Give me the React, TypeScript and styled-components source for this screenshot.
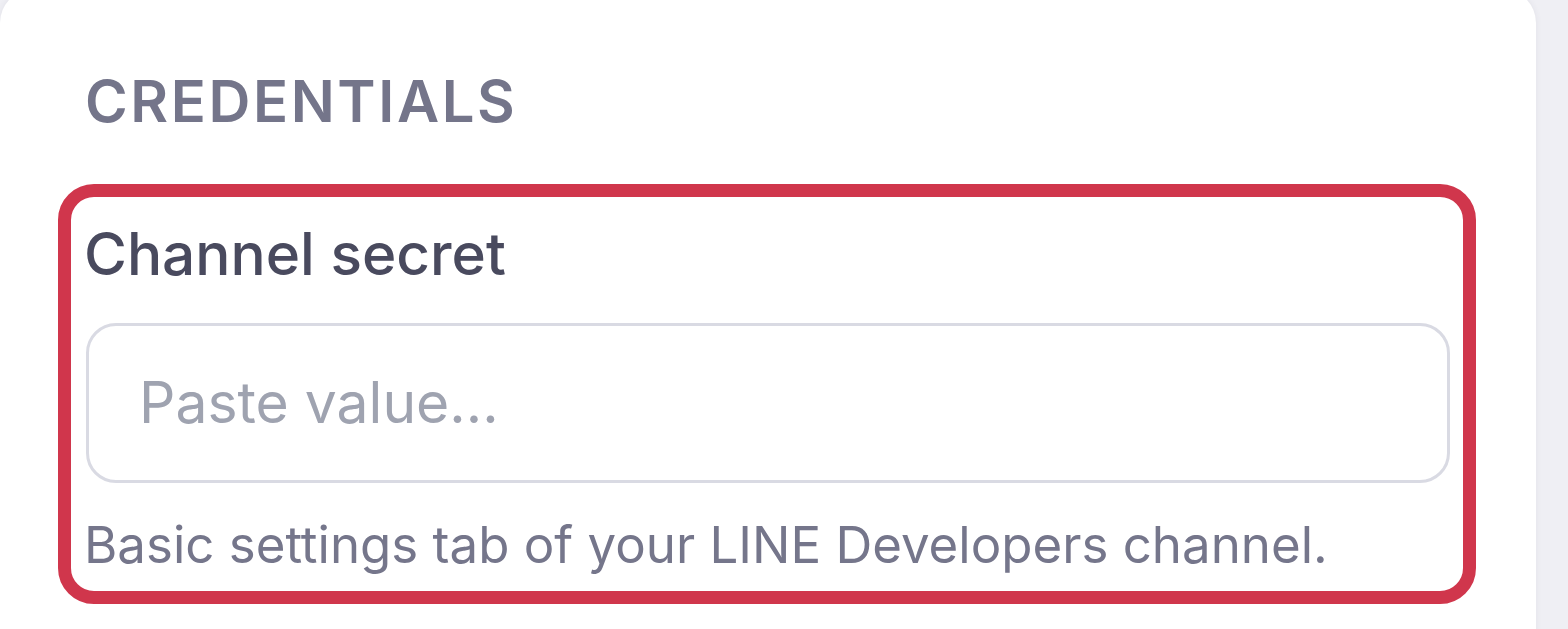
import React from "react";
import styled, { createGlobalStyle } from "styled-components";

const GlobalStyle = createGlobalStyle`
  html, body {
    margin: 0;
    padding: 0;
    background: #efeff4;
  }
  body {
    font-family: Inter, "Noto Sans", "Liberation Sans", sans-serif;
    -webkit-font-smoothing: antialiased;
  }
  * { box-sizing: border-box; }
`;

const Page = styled.div`
  width: 1568px;
  height: 629px;
  overflow: hidden;
`;

const Card = styled.section`
  width: 1536px;
  margin-top: -11px;
  padding: 83px 60px 60px 58px;
  background: #ffffff;
  border-radius: 34px;
  box-shadow: 0 0 6px rgba(60, 60, 90, 0.08);
`;

const SectionTitle = styled.h2`
  margin: 0 0 54px 27px;
  font-size: 58px;
  line-height: 1;
  font-weight: 600;
  letter-spacing: 2.6px;
  color: #74758a;
  text-transform: uppercase;
`;

const FieldFrame = styled.div`
  display: flex;
  flex-direction: column;
  border: 13px solid #d0364c;
  border-radius: 36px;
  padding: 28px 13px 21px 15px;
`;

const FieldLabel = styled.label`
  margin-left: -2px;
  margin-bottom: 39px;
  font-size: 58.5px;
  line-height: 1;
  font-weight: 500;
  color: #494a5e;
`;

const TextInput = styled.input`
  height: 160px;
  width: 100%;
  border: 3px solid #d9dae3;
  border-radius: 30px;
  padding: 0 50px;
  font-family: inherit;
  font-size: 57px;
  color: #494a5e;
  background: #ffffff;
  outline: none;
  &::placeholder {
    color: #9fa3b0;
  }
`;

const Hint = styled.p`
  margin: 36px 0 0 -2px;
  font-size: 51px;
  line-height: 1;
  color: #75768b;
`;

export default function App() {
  return (
    <>
      <GlobalStyle />
      <Page>
        <Card>
          <SectionTitle>Credentials</SectionTitle>
          <FieldFrame>
            <FieldLabel htmlFor="channel-secret">Channel secret</FieldLabel>
            <TextInput id="channel-secret" placeholder="Paste value..." />
            <Hint>Basic settings tab of your LINE Developers channel.</Hint>
          </FieldFrame>
        </Card>
      </Page>
    </>
  );
}
